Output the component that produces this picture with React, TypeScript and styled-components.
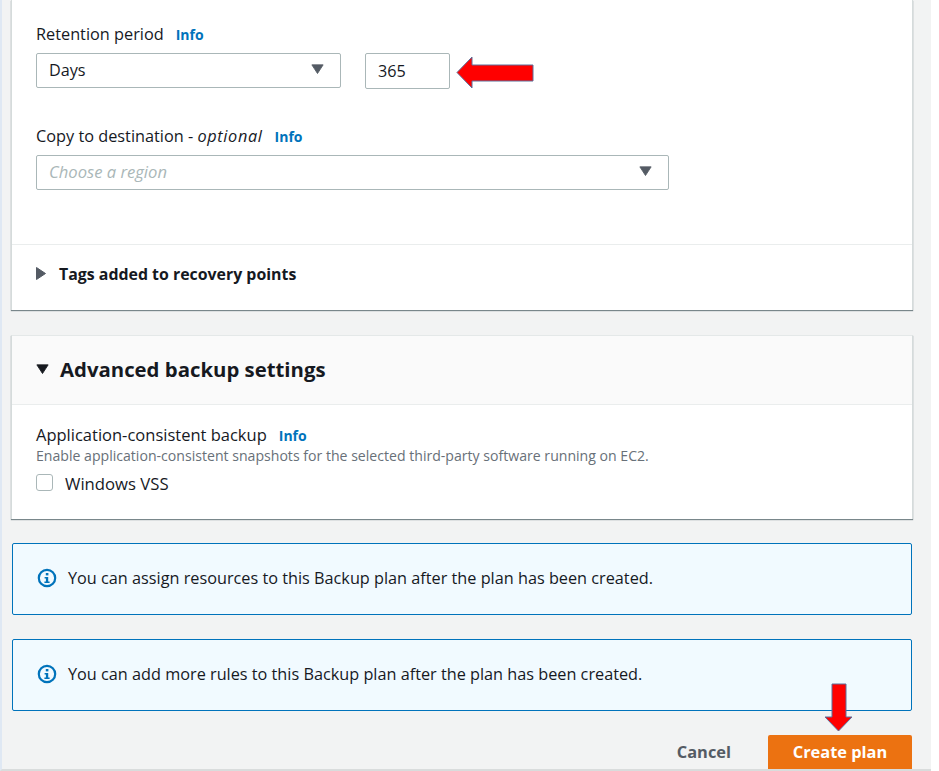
import React from 'react'
import styled, { createGlobalStyle } from 'styled-components'

const GlobalStyle = createGlobalStyle`
  html, body {
    margin: 0;
    padding: 0;
    background: #fff;
    font-family: "Open Sans", "Noto Sans", sans-serif;
    color: #16191f;
  }
  * { box-sizing: border-box; }
`

const Page = styled.div`
  position: relative;
  width: 931px;
  height: 771px;
  overflow: hidden;
  background: #f2f3f3;
  border-left: 2px solid #dfe8f3;
  border-bottom: 2px solid #d9dcdc;
  padding: 0 18px 0 9px;
  display: flex;
  flex-direction: column;
  & > * { flex-shrink: 0; }
`

const Card = styled.section`
  background: #fff;
  border-left: 1px solid #d5dbdb;
  border-right: 1px solid #d5dbdb;
  box-shadow: 0 1px 1px 0 rgba(0, 28, 36, 0.5);
`

const RetentionCard = styled(Card)`
  height: 310px;
  display: flex;
  flex-direction: column;
`

const AdvancedCard = styled(Card)`
  margin-top: 25px;
  height: 184px;
  border-top: 1px solid #e4e8e8;
`

const Fields = styled.div`
  padding: 24px 24px 0;
  height: 244px;
`

const Field = styled.div<{ $gap?: number }>`
  margin-top: ${(p) => p.$gap ?? 0}px;
`

const LabelRow = styled.div<{ $size?: number }>`
  display: flex;
  align-items: baseline;
  gap: 12px;
  height: 20px;
  line-height: 20px;
  font-size: ${(p) => p.$size ?? 16.3}px;
`

const Optional = styled.i`
  font-style: italic;
  letter-spacing: 0.65px;
`

const InfoLink = styled.a`
  font-size: 14px;
  font-weight: 700;
  color: #0073bb;
`

const ControlRow = styled.div`
  display: flex;
  gap: 24px;
  margin-top: 9px;
`

const Select = styled.div<{ $width: number; $placeholder?: boolean }>`
  width: ${(p) => p.$width}px;
  height: 35px;
  padding: 0 16px 2px 12px;
  display: flex;
  align-items: center;
  justify-content: space-between;
  background: #fff;
  border: 1px solid #aab7b8;
  border-radius: 2px;
  font-size: ${(p) => (p.$placeholder ? 16.6 : 16.2)}px;
  color: ${(p) => (p.$placeholder ? '#aab7b8' : '#16191f')};
  font-style: ${(p) => (p.$placeholder ? 'italic' : 'normal')};
`

const NumberInput = styled.div`
  width: 85px;
  height: 36px;
  padding: 0 12px 1px;
  display: flex;
  align-items: center;
  border: 1px solid #aab7b8;
  border-radius: 2px;
  font-size: 16.2px;
`

const TagsRow = styled.div`
  border-top: 1px solid #eaeded;
  flex: 1;
  padding: 0 24px 8px;
  display: flex;
  align-items: center;
  gap: 13px;
  font-size: 15.9px;
  font-weight: 700;
`

const AdvancedHeader = styled.header`
  height: 69px;
  padding: 0 24px 2px;
  background: #fafafa;
  border-bottom: 1px solid #eaeded;
  display: flex;
  align-items: center;
  gap: 11px;
  font-size: 20.35px;
  font-weight: 700;
`

const AdvancedBody = styled.div`
  padding: 20px 24px 0;
`

const Description = styled.div`
  margin-top: 2px;
  font-size: 14.1px;
  line-height: 17px;
  color: #687078;
`

const CheckboxRow = styled.label`
  margin-top: 10px;
  display: flex;
  align-items: center;
  gap: 12px;
  height: 18px;
  font-size: 16.7px;
`

const CheckboxBox = styled.span`
  width: 17px;
  height: 17px;
  margin-top: -1px;
  background: #fff;
  border: 1px solid #aab7b8;
  border-radius: 3px;
`

const Alert = styled.div`
  margin: 24px 0 0 1px;
  height: 72px;
  padding: 0 24px 2px;
  width: 900px;
  display: flex;
  align-items: center;
  gap: 11px;
  background: #f1faff;
  border: 1px solid #0073bb;
  border-radius: 2px;
  font-size: 16.25px;
`

const Actions = styled.div`
  margin: 24px 0 0 1px;
  width: 900px;
  display: flex;
  justify-content: flex-end;
  align-items: center;
  gap: 37px;
`

const CancelButton = styled.button`
  border: 0;
  padding: 0 0 3px;
  background: transparent;
  font: 700 16.4px "Open Sans", sans-serif;
  color: #545b64;
`

const PrimaryButton = styled.button`
  width: 144px;
  height: 36px;
  border: 0;
  padding: 0 0 4px;
  border-radius: 2px;
  background: #ec7211;
  color: #fff;
  font: 700 16.4px "Open Sans", sans-serif;
`

const Arrow = styled.svg<{ $left: number; $top: number }>`
  position: absolute;
  left: ${(p) => p.$left}px;
  top: ${(p) => p.$top}px;
`

const CaretDown = ({ color }: { color: string }) => (
  <svg width="13" height="10.4" viewBox="0 0 15 12" style={{ flexShrink: 0 }}>
    <path d="M1 1 H14 L7.5 11 Z" fill={color} stroke={color} strokeLinejoin="round" />
  </svg>
)

const CaretRight = ({ color }: { color: string }) => (
  <svg width="10" height="13" viewBox="0 0 10 13" style={{ flexShrink: 0 }}>
    <path d="M0.5 0.5 V12.5 L9.5 6.5 Z" fill={color} stroke={color} strokeLinejoin="round" />
  </svg>
)

const InfoIcon = () => (
  <svg width="20" height="20" viewBox="0 0 20 20" style={{ flexShrink: 0 }}>
    <circle cx="10" cy="10" r="8.2" fill="none" stroke="#0073bb" strokeWidth="2.2" />
    <rect x="8.8" y="5" width="2.6" height="2.4" fill="#0073bb" />
    <path d="M7.6 9 H11.2 V13.4 H12.6 V15 H7.4 V13.4 H8.9 V10.5 H7.6 Z" fill="#0073bb" />
  </svg>
)

export default function App() {
  return (
    <>
      <GlobalStyle />
      <Page>
        <RetentionCard>
          <Fields>
            <Field>
              <LabelRow>
                Retention period <InfoLink>Info</InfoLink>
              </LabelRow>
              <ControlRow>
                <Select $width={305}>
                  Days
                  <CaretDown color="#545b64" />
                </Select>
                <NumberInput>365</NumberInput>
              </ControlRow>
            </Field>
            <Field $gap={37}>
              <LabelRow>
                <span>
                  Copy to destination - <Optional>optional</Optional>
                </span>
                <InfoLink>Info</InfoLink>
              </LabelRow>
              <ControlRow>
                <Select $width={633} $placeholder>
                  Choose a region
                  <CaretDown color="#545b64" />
                </Select>
              </ControlRow>
            </Field>
          </Fields>
          <TagsRow>
            <CaretRight color="#545b64" />
            Tags added to recovery points
          </TagsRow>
        </RetentionCard>

        <AdvancedCard>
          <AdvancedHeader>
            <CaretDown color="#16191f" />
            Advanced backup settings
          </AdvancedHeader>
          <AdvancedBody>
            <LabelRow $size={16.5}>
              Application-consistent backup <InfoLink>Info</InfoLink>
            </LabelRow>
            <Description>
              Enable application-consistent snapshots for the selected third-party software running on EC2.
            </Description>
            <CheckboxRow>
              <CheckboxBox />
              Windows VSS
            </CheckboxRow>
          </AdvancedBody>
        </AdvancedCard>

        <Alert>
          <InfoIcon />
          You can assign resources to this Backup plan after the plan has been created.
        </Alert>
        <Alert>
          <InfoIcon />
          You can add more rules to this Backup plan after the plan has been created.
        </Alert>

        <Actions>
          <CancelButton>Cancel</CancelButton>
          <PrimaryButton>Create plan</PrimaryButton>
        </Actions>

        <Arrow $left={452} $top={56} width="80" height="34" viewBox="0 0 80 34">
          <path d="M3 16.5 L18 1 V9 H79 V25 H18 V32 Z" fill="#ff0000" stroke="#5b6f9a" strokeWidth="1" />
        </Arrow>
        <Arrow $left={821} $top={683} width="30" height="50" viewBox="0 0 30 50">
          <path d="M9 1 H23 V34 H29 L15.5 48 L2 34 H9 Z" fill="#ff0000" stroke="#5b6f9a" strokeWidth="1" />
        </Arrow>
      </Page>
    </>
  )
}
